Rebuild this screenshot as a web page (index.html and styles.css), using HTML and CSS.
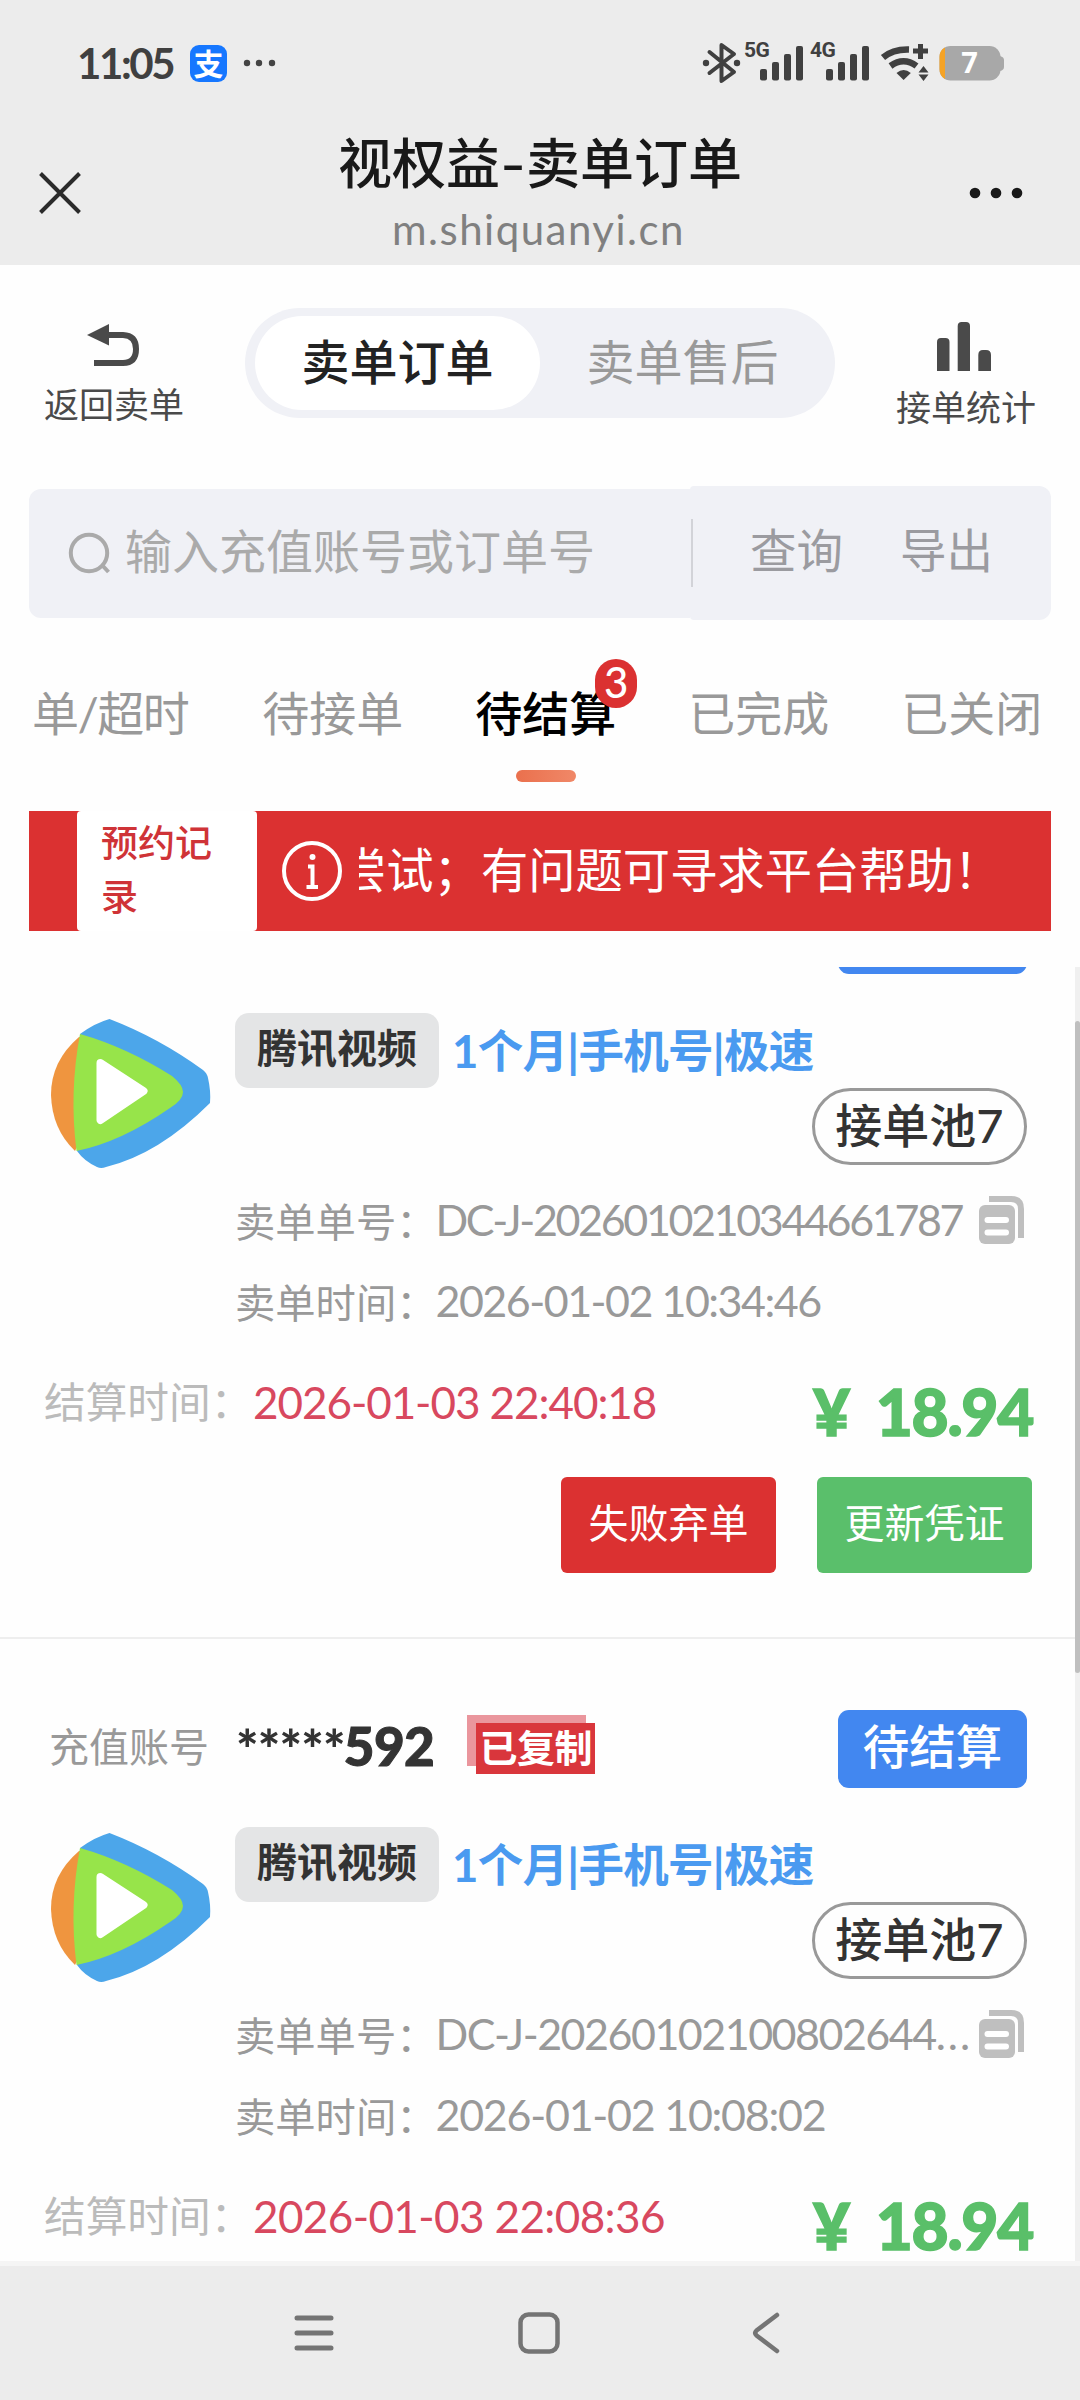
FILE: index.html
```html
<!DOCTYPE html>
<html lang="zh-CN">
<head>
<meta charset="utf-8">
<title>视权益-卖单订单</title>
<link rel="stylesheet" href="styles.css">
</head>
<body>
<svg width="0" height="0" class="defs">
  <symbol id="logo" viewBox="0 0 160 150">
    <path fill="#4ca6ea" d="M29 15Q44 4 58.500 0Q108 19 152 51Q156 54 157 59Q160 72 159 84Q108 135 55 148Q50 150 46 148Q33 142 26 132Z"/>
    <path fill="#ef953f" d="M28 18Q0 42 0 76Q1 110 24 132L30 120V18Z"/>
    <path fill="#97e44a" d="M29 15Q75 28 121 57Q132 66 132 73Q132 81 119 89Q70 123 25.500 132Q18 74 29 15Z"/>
    <path fill="#fff" stroke="#fff" stroke-width="8" stroke-linejoin="round" d="M49.500 44L92.500 72L49.500 101Z"/>
  </symbol>
  <symbol id="copy" viewBox="0 0 46 49">
    <path fill="none" stroke="#bfbfbf" stroke-width="6" d="M10 3H32Q42 3 42 13V42"/>
    <rect x="0" y="9" width="36" height="39" rx="6" fill="#bfbfbf"/>
    <path stroke="#fff" stroke-width="6" stroke-linecap="round" d="M8.500 24H27M8.500 36.500H27"/>
  </symbol>
</svg>

<header class="header">
  <div class="status">
    <span class="time">11:05</span>
    <span class="alipay">支</span>
    <svg class="more-dots" width="34" height="8" viewBox="0 0 34 8" fill="#444"><circle cx="4" cy="4" r="3.200"/><circle cx="16" cy="4" r="3.200"/><circle cx="29" cy="4" r="3.200"/></svg>
    <svg class="indicators" width="306" height="56" viewBox="700 36 306 56">
      <g fill="none" stroke="#404040" stroke-width="4" stroke-linejoin="round" stroke-linecap="round">
        <path d="M709.500 53L734 73L721.500 82V46L734 55L709.500 74"/>
      </g>
      <g fill="#404040">
        <circle cx="706" cy="64" r="3.200"/><circle cx="737" cy="64" r="3.200"/>
        <text x="744" y="58" class="net">5G</text>
        <rect x="760" y="70" width="7" height="11.500" rx="2"/><rect x="772" y="63" width="7" height="18.500" rx="2"/><rect x="784" y="55" width="7" height="26.500" rx="2"/><rect x="796" y="47" width="7" height="34.500" rx="2"/>
        <text x="810" y="58" class="net">4G</text>
        <rect x="826" y="70" width="7" height="11.500" rx="2"/><rect x="838" y="63" width="7" height="18.500" rx="2"/><rect x="850" y="55" width="7" height="26.500" rx="2"/><rect x="862" y="47" width="7" height="34.500" rx="2"/>
        <path d="M896.500 74Q903.600 68 910.800 74L903.600 81Z"/>
        <path d="M918.500 73.500L923.500 67L928.500 73.500ZM918.500 75.500L923.500 82L928.500 75.500Z"/>
      </g>
      <g fill="none" stroke="#404040" stroke-width="6.500">
        <path d="M883 58.500Q893 50 909 50.500"/>
        <path d="M890.500 67Q903.600 57.500 916.500 67"/>
        <path stroke-width="5" d="M913 52H928M920.500 45V60"/>
      </g>
      <rect x="939.500" y="47" width="61" height="34.500" rx="11" fill="#a8a8a8"/>
      <path fill="#f5a326" d="M945 48.500V80Q939.500 77 939.500 70V58Q939.500 51 945 48.500Z"/>
      <path fill="#a8a8a8" d="M1000 57Q1004 58 1004 61V68Q1004 71 1000 72Z"/>
      <text x="969.500" y="74" class="level">7</text>
    </svg>
  </div>
  <div class="titlebar">
    <svg class="close" width="42" height="42" viewBox="0 0 42 42"><path stroke="#2a2a2a" stroke-width="4" d="M1.500 1.500L40.500 40.500M40.500 1.500L1.500 40.500"/></svg>
    <div class="titles">
      <h1>视权益<span class="dash">-</span>卖单订单</h1>
      <p>m.shiquanyi.cn</p>
    </div>
    <svg class="menu" width="54" height="12" viewBox="0 0 54 12" fill="#191919"><circle cx="6" cy="6" r="5.300"/><circle cx="27" cy="6" r="5.300"/><circle cx="48" cy="6" r="5.300"/></svg>
  </div>
</header>

<section class="toolbar">
  <a class="tool back">
    <svg width="54" height="48" viewBox="0 0 54 48"><path fill="#4a4a4a" d="M0 13L22 2V23.500Z"/><path fill="none" stroke="#4a4a4a" stroke-width="6" d="M21 13H36Q49 13.500 49 27Q49 41 36 41H7"/></svg>
    <span>返回卖单</span>
  </a>
  <div class="switch"><span class="on">卖单订单</span><span>卖单售后</span></div>
  <a class="tool stats">
    <svg width="54" height="50" viewBox="0 0 54 50" fill="#4a4a4a"><path d="M0 50V21Q0 17 4 17H8.500Q12.500 17 12.500 21V50ZM20.700 50V5Q20.700 1 24.700 1H29Q33 1 33 5V50ZM41.300 50V34Q41.300 29 46 29H49Q54 29 54 34V50Z"/></svg>
    <span>接单统计</span>
  </a>
</section>

<section class="search">
  <div class="field">
    <svg width="44" height="44" viewBox="0 0 44 44" fill="none" stroke="#aaa" stroke-width="4"><circle cx="21" cy="22" r="18.200"/><path d="M34 34L40.500 41"/></svg>
    <span>输入充值账号或订单号</span>
  </div>
  <div class="actions"><i></i><span>查询</span><span>导出</span></div>
</section>

<nav class="tabs">
  <span class="tab first">单/超时</span>
  <span class="tab">待接单</span>
  <span class="tab active">待结算<b class="badge">3</b></span>
  <span class="tab">已完成</span>
  <span class="tab">已关闭</span>
</nav>

<section class="notice">
  <div class="reserve">预约记录</div>
  <svg width="62" height="62" viewBox="0 0 62 62" fill="none" stroke="#fff" stroke-width="4"><circle cx="31" cy="31" r="28"/><path d="M27 26.500H31.500V47M25.500 47H37"/><circle cx="31.500" cy="17" r="3" fill="#fff" stroke="none"/></svg>
  <div class="marquee">尝试；有问题可寻求平台帮助！</div>
</section>

<main class="list">
  <article class="card first-card">
    <div class="account"><span class="label">充值账号</span><span class="stars">*****</span><span class="tail">787</span><span class="status-tag">待结算</span></div>
    <div class="body">
      <svg class="logo"><use href="#logo"/></svg>
      <div class="info">
        <div class="product"><span class="chip">腾讯视频</span><span class="name">1个月|手机号|极速</span></div>
        <div class="pool">接单池<span>7</span></div>
        <div class="line">卖单单号：<span class="num compact">DC-J-2026010210344661787</span><svg class="copy"><use href="#copy"/></svg></div>
        <div class="line">卖单时间：<span class="num">2026-01-02 10:34:46</span></div>
      </div>
    </div>
    <div class="settle"><span class="settle-label">结算时间：</span><span class="settle-time">2026-01-03 22:40:18</span><span class="price"><span class="yen">¥</span>18.94</span></div>
    <div class="buttons"><span class="btn red">失败弃单</span><span class="btn green">更新凭证</span></div>
  </article>

  <article class="card">
    <div class="account"><span class="label">充值账号</span><span class="stars">*****</span><span class="tail">592</span><span class="copied">已复制</span><span class="status-tag">待结算</span></div>
    <div class="body">
      <svg class="logo"><use href="#logo"/></svg>
      <div class="info">
        <div class="product"><span class="chip">腾讯视频</span><span class="name">1个月|手机号|极速</span></div>
        <div class="pool">接单池<span>7</span></div>
        <div class="line">卖单单号：<span class="num">DC-J-20260102100802644<span class="dots">...</span></span><svg class="copy"><use href="#copy"/></svg></div>
        <div class="line">卖单时间：<span class="num wide">2026-01-02 10:08:02</span></div>
      </div>
    </div>
    <div class="settle"><span class="settle-label">结算时间：</span><span class="settle-time wide">2026-01-03 22:08:36</span><span class="price"><span class="yen">¥</span>18.94</span></div>
  </article>
  <div class="scrollbar"><i></i></div>
</main>

<footer class="navbar">
  <svg width="40" height="36" viewBox="0 0 40 36" stroke="#747474" stroke-width="5" stroke-linecap="round"><path d="M3 3H37M3 18H37M3 33H37"/></svg>
  <svg class="home" width="42" height="42" viewBox="0 0 42 42"><rect x="2.500" y="2.500" width="37" height="37" rx="8" fill="none" stroke="#747474" stroke-width="4.500"/></svg>
  <svg width="28" height="42" viewBox="0 0 28 42"><path fill="none" stroke="#747474" stroke-width="4.500" stroke-linecap="round" stroke-linejoin="round" d="M25 3L4.500 18.500Q2 21 4.500 23.500L25 39"/></svg>
</footer>
</body>
</html>
```
FILE: styles.css
```css
* { box-sizing: border-box; margin: 0; padding: 0; }
body {
  width: 1080px; height: 2400px; overflow: hidden; background: #fefefe;
  display: flex; flex-direction: column; position: relative;
  font-family: Lato, "Noto Sans CJK SC", sans-serif; color: #333; white-space: nowrap;
}
svg { display: block; flex: none; }
.defs { position: absolute; }

/* header */
.header { height: 265px; background: #ececec; flex: none; }
.status { height: 126px; display: flex; align-items: center; padding: 0 74px 0 77px; }
.time { font-size: 42px; font-weight: 700; color: #404040; letter-spacing: -2.400px; width: 113px; line-height: 60px; }
.alipay {
  width: 37px; height: 37px; border-radius: 9px; background: #1677ff; color: #fff;
  font-size: 30px; line-height: 36px; font-weight: 700; text-align: center;
}
.more-dots { margin-left: 16px; }
.indicators { margin-left: auto; }
.net { font: 700 21px Roboto, sans-serif; letter-spacing: -.5px; }
.level { font: 700 29px "Open Sans", sans-serif; fill: #fff; text-anchor: middle; }
.titlebar { height: 139px; display: flex; align-items: flex-start; justify-content: space-between; padding: 0 57px 0 39px; }
.close { margin-top: 46px; }
.menu { margin-top: 61px; }
.titles { text-align: center; padding-left: 30px; }
.titles h1 { font-size: 54px; font-weight: 500; line-height: 76px; color: #191919; }
.dash { display: inline-block; transform: scaleX(1.3); margin: 0 3px; }
.titles p { font-size: 42px; line-height: 54px; letter-spacing: 1.500px; color: #808080; margin-right: 3px; }

/* toolbar */
.toolbar { height: 221px; flex: none; display: flex; justify-content: space-between; align-items: flex-start; padding: 43px 43px 0; }
.tool { width: 142px; display: flex; flex-direction: column; align-items: center; font-size: 35px; line-height: 50px; color: #4a4a4a; }
.back { padding-top: 14px; gap: 9px; }
.stats { padding-top: 13px; gap: 11px; }
.stats svg { margin-right: 4px; }
.switch { display: flex; width: 590px; height: 110px; padding: 8px 10px; border-radius: 55px; background: #f0f1f6; margin-left: -8px; margin-right: -8px; }
.switch span { flex: 1; text-align: center; font-size: 48px; line-height: 92px; color: #999; border-radius: 48px; }
.switch .on { background: #fff; color: #222; font-weight: 500; }

/* search */
.search { height: 134px; flex: none; display: flex; align-items: center; padding: 0 29px; }
.field { width: 661px; height: 129px; border-radius: 12px 0 0 12px; background: #f0f1f6; display: flex; align-items: center; padding-left: 39px; font-size: 47px; line-height: 124px; color: #aaa; }
.field span { margin: -4px 0 0 13px; }
.actions { flex: 1; height: 134px; border-radius: 4px 12px 12px 4px; background: #f0f1f6; display: flex; align-items: center; font-size: 46.500px; line-height: 66px; color: #9b9ba0; }
.actions i { width: 2px; height: 68px; background: #d2d3d8; margin-left: 1px; }
.actions span { margin: -6px 0 0 57px; }

/* tabs */
.tabs { height: 191px; flex: none; display: flex; margin: 0 0 0 29px; overflow: hidden; font-size: 47px; color: #999; }
.tab { position: relative; flex: none; padding: 62px 36px 0; line-height: 62px; }
.tab.first { padding-left: 3px; padding-right: 38px; letter-spacing: -1.500px; }
.tab.active { color: #000; font-weight: 500; }
.tab.active::after { content: ""; position: absolute; left: 77px; top: 150px; width: 60px; height: 12px; border-radius: 6px; background: linear-gradient(90deg, #ea704d, #f08868); }
.badge { position: absolute; left: 156px; top: 39px; width: 42px; height: 49px; border-radius: 21px; background: #db3131; color: #fff; font-size: 42px; font-weight: 500; line-height: 47px; text-align: center; }

/* notice */
.notice { height: 120px; flex: none; margin: 0 29px; background: #db3131; display: flex; align-items: center; color: #fff; }
.reserve { width: 180px; height: 120px; margin-left: 48px; padding: 5px 22px 0 24px; background: #fff; color: #cf3337; border-radius: 4px; font-size: 37px; line-height: 54px; font-weight: 500; white-space: normal; word-break: break-all; }
.notice svg { margin: 0 16px 0 24px; }
.marquee { flex: 1; overflow: hidden; font-size: 47.300px; line-height: 80px; text-indent: -20px; margin-top: -2px; }

/* orders */
.list { position: relative; height: 1294px; flex: none; margin-top: 36px; overflow: hidden; }
.card { height: 814px; padding: 71px 53px 0 51px; border-bottom: 2px solid #eee; }
.first-card { margin-top: -142px; }
.account { position: relative; z-index: 0; height: 78px; display: flex; align-items: center; }
.label { width: 187px; margin-left: -2px; font-size: 40px; line-height: 60px; color: #999; margin-top: -5px; }
.stars { font-size: 53px; font-weight: 900; line-height: 78px; letter-spacing: -.8px; }
.tail { font-size: 53px; font-weight: 900; line-height: 72px; margin: -6px 0 0 -1px; letter-spacing: -.5px; -webkit-text-stroke: 1px #333; }
.copied { position: relative; width: 119px; height: 51px; margin: -2px 0 0 42px; background: #d9363c; color: #fff; font-size: 38px; font-weight: 700; line-height: 49px; letter-spacing: -.5px; text-align: center; }
.copied::before { content: ""; position: absolute; z-index: -1; left: -9px; top: -8px; width: 119px; height: 51px; background: #ea969d; }
.status-tag { margin-left: auto; width: 189px; height: 78px; border-radius: 11px; background: #4287f0; color: #fff; font-size: 46.500px; font-weight: 500; line-height: 73px; text-align: center; }
.body { display: flex; margin-top: 39px; }
.logo { width: 160px; height: 150px; margin: 6px 24px 0 0; }
.info { flex: 1; }
.product { height: 75px; display: flex; align-items: center; }
.chip { width: 204px; height: 75px; border-radius: 14px; background: #e4e5e6; color: #333; font-size: 40px; font-weight: 700; line-height: 71px; text-align: center; }
.name { margin-left: 13px; font-size: 45.500px; font-weight: 700; line-height: 76px; letter-spacing: -.7px; color: #4a9af0; }
.pool { width: 215px; height: 77px; margin: 0 0 14px auto; border: 3px solid #999; border-radius: 39px; font-size: 47px; font-weight: 500; line-height: 69px; text-align: center; }
.line { height: 81px; display: flex; align-items: center; font-size: 40.300px; color: #999; }
.num { font-size: 43px; letter-spacing: -1.500px; margin-left: -1px; }
.compact { letter-spacing: -2.350px; }
.num.wide { letter-spacing: -1.250px; }
.dots { letter-spacing: 2px; }
.copy { width: 46px; height: 49px; margin: 2px 2px 0 auto; }
.settle { height: 136px; display: flex; align-items: flex-start; margin-left: -7px; margin-right: -6px; padding-top: 2px; }
.settle-label { width: 209px; font-size: 41.700px; line-height: 118px; color: #bbb; }
.settle-time { font-size: 44px; line-height: 119px; letter-spacing: -1.050px; color: #d8485f; }
.settle-time.wide { letter-spacing: -.6px; }
.price { margin-left: auto; font-size: 64px; font-weight: 900; line-height: 138px; color: #5abf69; letter-spacing: -1.300px; -webkit-text-stroke: 1.500px #5abf69; }
.yen { margin-right: 27px; }
.buttons { display: flex; justify-content: flex-end; gap: 41px; margin-right: -5px; }
.btn { width: 215px; height: 96px; border-radius: 6px; color: #fff; font-size: 40px; line-height: 92px; text-align: center; }
.red { background: #db3131; }
.green { background: #5abf6b; }
.scrollbar { position: absolute; right: 0; top: 0; width: 5px; height: 1294px; background: #f0f0f0; padding-top: 54px; }
.scrollbar i { display: block; height: 652px; background: #bfbfbf; border-radius: 3px; }

/* system navigation */
.navbar { flex: 1; border-top: 5px solid #f5f5f5; background: #ececec; display: flex; align-items: center; justify-content: space-between; padding: 0 300px 0 294px; }
.home { margin-right: 8px; }
```
